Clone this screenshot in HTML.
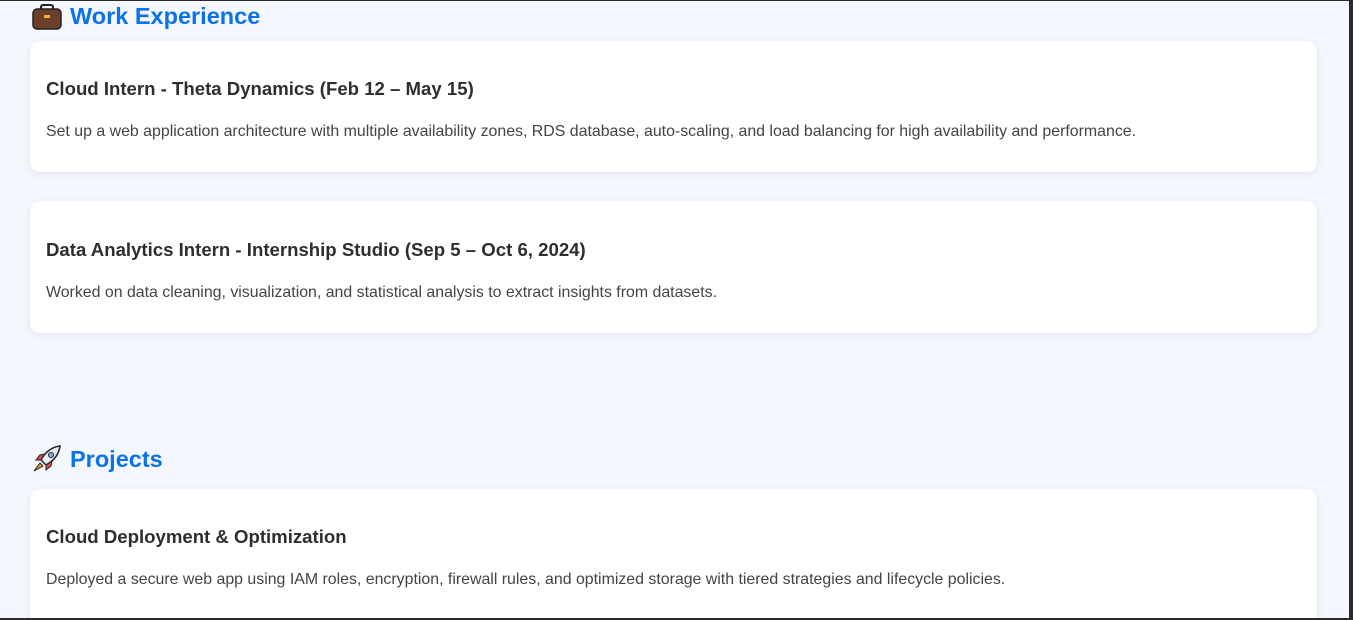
<!DOCTYPE html>
<html><head><style>
html,body{margin:0;padding:0;width:1353px;height:620px;overflow:hidden;}
body{background:#2b2b2b;position:relative;font-family:"Liberation Sans",sans-serif;}
.page{position:absolute;left:0;top:1px;width:1349px;height:617px;background:#f4f7fe;overflow:hidden;}
.h{position:absolute;left:32px;font-size:23.5px;font-weight:bold;color:#0b72eb;display:flex;align-items:center;gap:8px;}
.card{position:absolute;left:30px;width:1287px;background:#fff;border-radius:10px;box-shadow:0 2px 8px rgba(0,0,0,0.08);}
.t{position:absolute;left:16px;font-size:18.6px;font-weight:bold;color:#2e2e2e;white-space:nowrap;}
.d{position:absolute;left:16px;font-size:15.9px;color:#444;white-space:nowrap;}
</style></head><body>
<div class="page">
<div class="h" style="top:2px"><svg width="30" height="26" viewBox="0 0 30 26"><rect x="9" y="1" width="12" height="6" rx="2" fill="none" stroke="#222" stroke-width="2"/><rect x="1" y="5" width="28" height="20" rx="4" fill="#6b3f2a" stroke="#222" stroke-width="1.5"/><rect x="12" y="11" width="6" height="3" fill="#f0b429"/></svg>Work Experience</div>
<div class="card" style="top:40px;height:131px">
<div class="t" style="top:37px">Cloud Intern - Theta Dynamics (Feb 12 – May 15)</div>
<div class="d" style="top:82px">Set up a web application architecture with multiple availability zones, RDS database, auto-scaling, and load balancing for high availability and performance.</div>
</div>
<div class="card" style="top:200px;height:132px">
<div class="t" style="top:38px">Data Analytics Intern - Internship Studio (Sep 5 – Oct 6, 2024)</div>
<div class="d" style="top:83px">Worked on data cleaning, visualization, and statistical analysis to extract insights from datasets.</div>
</div>
<div class="h" style="top:444px"><svg width="30" height="28" viewBox="0 0 30 28"><path d="M28 1 C20 2 13 7 9 15 L14 20 C22 16 27 9 28 1Z" fill="#e8eef4" stroke="#222" stroke-width="1.5"/><circle cx="19" cy="10" r="2.5" fill="#7fb3d8" stroke="#222"/><path d="M9 15 L4 15 L8 10 L13 9Z M14 20 L14 25 L19 21 L20 16Z" fill="#d94b3a" stroke="#222" stroke-width="1"/><path d="M8 18 L2 26 L11 21Z" fill="#f29c1f" stroke="#222" stroke-width="1"/></svg>Projects</div>
<div class="card" style="top:488px;height:140px">
<div class="t" style="top:37px">Cloud Deployment &amp; Optimization</div>
<div class="d" style="top:82px">Deployed a secure web app using IAM roles, encryption, firewall rules, and optimized storage with tiered strategies and lifecycle policies.</div>
</div>
</div>
</body></html>
